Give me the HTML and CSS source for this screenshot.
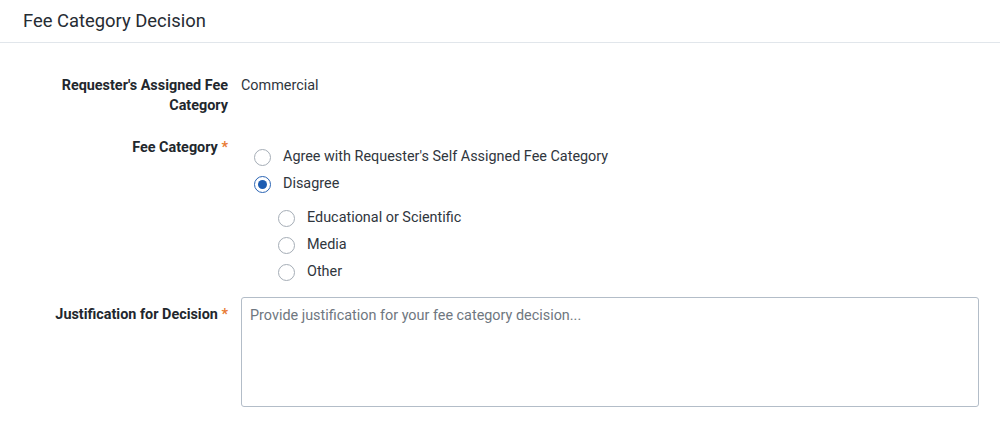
FILE: index.html
```html
<!DOCTYPE html>
<html lang="en">
<head>
<meta charset="utf-8">
<title>Fee Category Decision</title>
<link rel="stylesheet" href="styles.css">
</head>
<body>
<div class="panel">
  <div class="panel-header">Fee Category Decision</div>
  <div class="form">
    <div class="row row-assigned">
      <div class="label">Requester's Assigned Fee Category</div>
      <div class="value">Commercial</div>
    </div>
    <div class="row row-fee">
      <div class="label">Fee Category <span class="req">*</span></div>
      <div class="radios">
        <label class="radio"><span class="dot"></span><span>Agree with Requester's Self Assigned Fee Category</span></label>
        <label class="radio"><span class="dot checked"></span><span>Disagree</span></label>
        <div class="sub">
          <label class="radio"><span class="dot"></span><span>Educational or Scientific</span></label>
          <label class="radio"><span class="dot"></span><span>Media</span></label>
          <label class="radio"><span class="dot"></span><span>Other</span></label>
        </div>
      </div>
    </div>
    <div class="row row-just">
      <div class="label label-just">Justification for Decision <span class="req">*</span></div>
      <div class="textarea"><span class="placeholder">Provide justification for your fee category decision...</span></div>
    </div>
  </div>
</div>
</body>
</html>
```

FILE: styles.css
```css
* { box-sizing: border-box; }
html, body { margin: 0; padding: 0; background: #fff; }
body {
  font-family: Roboto, "Liberation Sans", Arial, sans-serif;
  color: #30363d;
  font-size: 14.4px;
}
.panel-header {
  height: 43px;
  line-height: 41px;
  padding-left: 23px;
  font-size: 18.4px;
  color: #262c33;
  border-bottom: 1px solid #e1e6eb;
}
.form {
  padding: 33px 21px 0 0;
}
.row {
  display: grid;
  grid-template-columns: 228px 1fr;
  column-gap: 13px;
  line-height: 20px;
}
.label {
  text-align: right;
  font-weight: bold;
  color: #22272d;
  padding-left: 56px;
}
.req { color: #e87a33; font-weight: bold; }
.value { color: #30363d; }
.row-fee { margin-top: 22px; }
.radios { padding-top: 5.5px; }
.radio {
  display: flex;
  align-items: center;
  height: 27px;
  padding-left: 13px;
  color: #30363d;
}
.sub { padding-left: 24px; margin-top: 7px; }
.dot {
  width: 17px;
  height: 17px;
  border-radius: 50%;
  border: 1.5px solid #a5adb6;
  margin-right: 12px;
  flex: none;
  display: flex;
  align-items: center;
  justify-content: center;
}
.dot.checked { border-color: #2a64b4; }
.dot.checked::after {
  content: "";
  width: 9px;
  height: 9px;
  border-radius: 50%;
  background: #1c5cb1;
}
.row-just { margin-top: 11.5px; }
.label-just { padding-top: 8px; padding-left: 0; white-space: nowrap; }
.textarea {
  height: 110px;
  border: 1px solid #b3bdc8;
  border-radius: 3px;
  padding: 8px 8px;
}
.placeholder { color: #6f7780; }
```
